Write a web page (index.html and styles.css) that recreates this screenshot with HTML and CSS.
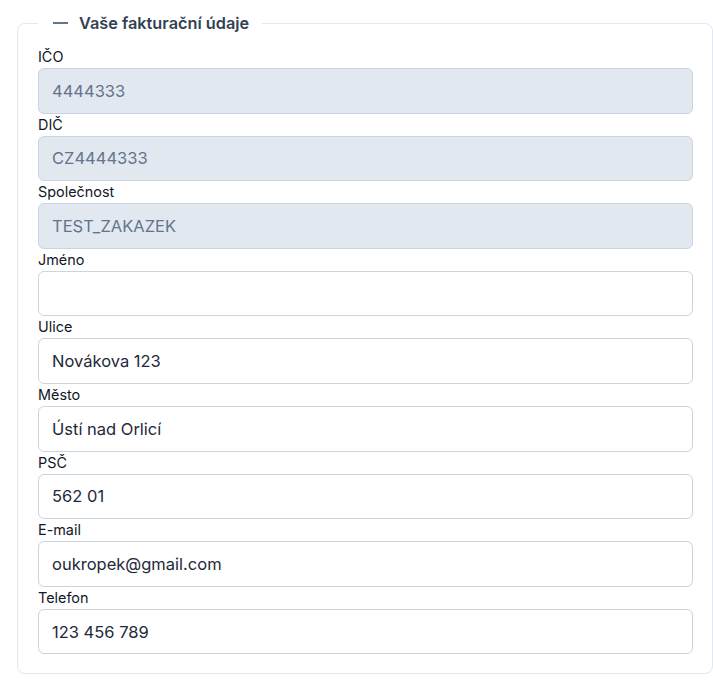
FILE: index.html
```html
<!DOCTYPE html>
<html lang="cs">
<head>
<meta charset="utf-8">
<title>Vaše fakturační údaje</title>
<link rel="stylesheet" href="styles.css">
</head>
<body>
<div class="page">
  <fieldset class="box">
    <legend class="legend"><span class="dash"></span>Vaše fakturační údaje</legend>
    <div class="field"><label class="label">IČO</label><input class="input" type="text" value="4444333" disabled></div>
    <div class="field"><label class="label">DIČ</label><input class="input" type="text" value="CZ4444333" disabled></div>
    <div class="field"><label class="label">Společnost</label><input class="input" type="text" value="TEST_ZAKAZEK" disabled></div>
    <div class="field"><label class="label">Jméno</label><input class="input" type="text" value=""></div>
    <div class="field"><label class="label">Ulice</label><input class="input" type="text" value="Novákova 123"></div>
    <div class="field"><label class="label">Město</label><input class="input" type="text" value="Ústí nad Orlicí"></div>
    <div class="field"><label class="label">PSČ</label><input class="input" type="text" value="562 01"></div>
    <div class="field"><label class="label">E-mail</label><input class="input" type="text" value="oukropek@gmail.com"></div>
    <div class="field"><label class="label">Telefon</label><input class="input" type="text" value="123 456 789"></div>
  </fieldset>
</div>
</body>
</html>
```
FILE: styles.css
```css
* { box-sizing: border-box; }
html, body { margin: 0; padding: 0; background: #ffffff; }
body { font-family: "Inter", "Noto Sans", sans-serif; color: #1e293b; }
.page { padding: 11px 1px 0 17px; }
.box {
  margin: 0;
  width: 696px;
  border: 1px solid #e2e8f0;
  border-radius: 8px;
  padding: 11px 19px 19px 20px;
}
.legend {
  padding: 0 13px 0 15px;
  font-size: 16.3px;
  line-height: 24px;
  font-weight: 600;
  color: #334155;
  display: flex;
  align-items: center;
}
.dash {
  display: inline-block;
  width: 15px;
  height: 2px;
  background: #64748b;
  margin-right: 11px;
}
.field { display: flex; flex-direction: column; }
.label {
  font-size: 14.4px;
  line-height: 22px;
  font-weight: 400;
  color: #111827;
}
.input {
  width: 100%;
  height: 45.6px;
  border: 1px solid #cbd5e1;
  border-radius: 6px;
  padding: 0 13px;
  font-family: inherit;
  font-size: 16.5px;
  color: #1e293b;
  background: #ffffff;
  outline: none;
}
.input:disabled {
  background: #e2e8f0;
  color: #64748b;
  -webkit-text-fill-color: #64748b;
  opacity: 1;
}
```
